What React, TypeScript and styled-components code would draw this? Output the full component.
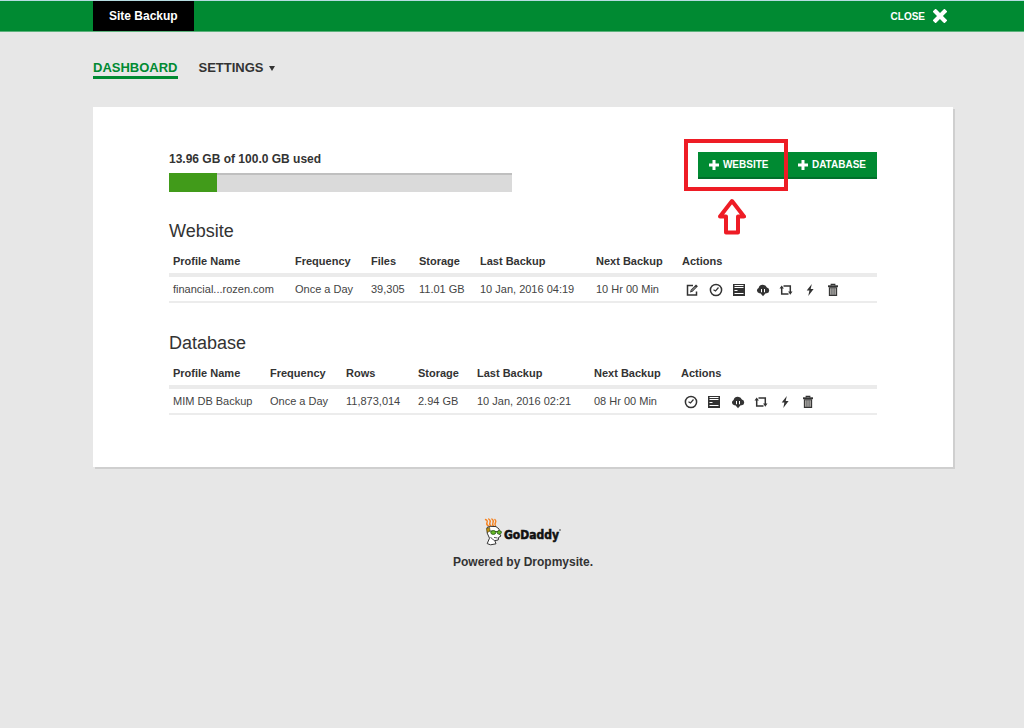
import React from "react";
import styled, { createGlobalStyle } from "styled-components";

const GlobalStyle = createGlobalStyle`
  * { box-sizing: border-box; }
  body {
    margin: 0;
    background: #e7e7e7;
    color: #333;
    font-family: "Liberation Sans", Arial, Helvetica, sans-serif;
    font-size: 12px;
    line-height: 16px;
  }
  button { font-family: inherit; cursor: pointer; }
`;

const TopBar = styled.header`
  display: flex;
  justify-content: space-between;
  height: 32px;
  padding: 0 77px 0 93px;
  background: #008a32;
  border-top: 1px solid #b5dce0;
  border-bottom: 1px solid #5bb27b;
`;

const Brand = styled.h1`
  display: flex;
  align-items: center;
  margin: 0;
  padding: 0 16px;
  background: #000;
  color: #fff;
  font-size: 12px;
`;

const CloseButton = styled.button`
  display: flex;
  align-items: center;
  gap: 8px;
  padding: 0;
  border: 0;
  background: none;
  color: #fff;
  font-size: 10px;
  font-weight: bold;
`;

const Page = styled.div`
  padding: 0 71px 0 93px;
`;

const Nav = styled.nav`
  display: flex;
  align-items: flex-start;
  gap: 21px;
  padding: 28px 0;
`;

const NavLink = styled.a<{ $active?: boolean }>`
  display: flex;
  align-items: center;
  gap: 5px;
  border-bottom: 3px solid ${(p) => (p.$active ? "#008a32" : "transparent")};
  color: ${(p) => (p.$active ? "#008a32" : "#333")};
  font-size: 13px;
  font-weight: bold;
  line-height: 16px;
  text-decoration: none;
`;

const Card = styled.main`
  padding: 44px 76px 52px;
  background: #fff;
  box-shadow: 2px 2px 0 #cfcfcf;
`;

const Summary = styled.div`
  display: flex;
  justify-content: space-between;
  align-items: flex-start;
`;

const Usage = styled.div`
  flex: 0 1 343px;
`;

const UsageLabel = styled.div`
  margin-bottom: 6px;
  font-weight: bold;
`;

const Meter = styled.div`
  height: 19px;
  background: #dadada;
  border-top: 2px solid #bfbfbf;
`;

const MeterFill = styled.div`
  height: 19px;
  margin-top: -2px;
  background: #419b1a;
`;

const ButtonRow = styled.div`
  display: flex;
  gap: 3px;
  padding-top: 1px;
`;

const AddButton = styled.button`
  display: flex;
  align-items: center;
  gap: 4px;
  min-width: 86px;
  height: 27px;
  padding: 0 11px;
  border: 0;
  border-bottom: 2px solid #00702a;
  background: #008a32;
  color: #fff;
  font-size: 10px;
  font-weight: bold;
`;

const Highlighted = styled.div`
  position: relative;
`;

const HighlightBox = styled.div`
  position: absolute;
  inset: -13px -4px -12px -14px;
  border: 4px solid #ee1c25;
  pointer-events: none;
`;

const HighlightArrow = styled.svg`
  position: absolute;
  top: 46px;
  left: 20px;
`;

const Section = styled.section`
  margin-top: 27px;
  & + & {
    margin-top: 28px;
  }
`;

const SectionTitle = styled.h2`
  margin: 0 0 7px;
  font-size: 18px;
  font-weight: normal;
  line-height: 24px;
`;

const Table = styled.table`
  width: 100%;
  table-layout: fixed;
  border-collapse: collapse;
  font-size: 11px;
  text-align: left;
  white-space: nowrap;
`;

const HeadCell = styled.th`
  height: 25px;
  padding: 0 4px 1px;
  border-bottom: 4px solid #ebebeb;
`;

const Cell = styled.td`
  height: 27px;
  padding: 0 4px;
  border-bottom: 2px solid #ececec;
  color: #444;
`;

const Actions = styled.div<{ $count: number }>`
  display: flex;
  justify-content: space-between;
  width: ${(p) => p.$count * 24 - 13}px;
  margin-left: 3px;
  padding-top: 2px;
`;

const IconButton = styled.button`
  display: flex;
  padding: 0;
  border: 0;
  background: none;
  color: #333;
`;

const Footer = styled.footer`
  display: flex;
  flex-direction: column;
  align-items: center;
  gap: 6px;
  padding: 51px 0;
  font-weight: bold;
`;

type IconName = "edit" | "schedule" | "snapshots" | "download" | "restore" | "run" | "delete";

const icons: Record<IconName, React.ReactNode> = {
  edit: (
    <>
      <path d="M8 2.5H2.5V12H11.5V8.5" fill="none" stroke="currentColor" strokeWidth="1.5" />
      <path d="M5 9.5L5.6 7L11 1.4L12.9 3.3L7.5 8.8Z" fill="currentColor" />
      <path d="M6.6 7.9L10.6 3.9" stroke="#fff" strokeWidth="0.6" />
    </>
  ),
  schedule: (
    <g fill="none" stroke="currentColor">
      <circle cx="7" cy="7" r="5.6" strokeWidth="1.5" />
      <path d="M4.5 6.8L6.5 8L9.5 4.5" strokeWidth="1.2" />
    </g>
  ),
  snapshots: (
    <>
      <path d="M1 1H13V13H1Z" fill="currentColor" />
      <path d="M2.5 2.5H11.5M2.5 4.5H11.5M2.5 10.5H11.5" stroke="#fff" strokeWidth="1" />
      <path d="M2.5 7.5H5.5" stroke="#fff" strokeWidth="1" />
    </>
  ),
  download: (
    <>
      <path
        d="M3.2 10.3A2.8 2.8 0 0 1 2.6 5A4.4 4.4 0 0 1 10.9 4.6A2.9 2.9 0 0 1 10.8 10.3Z"
        fill="currentColor"
      />
      <path d="M7 6V9.5" stroke="#fff" strokeWidth="4" />
      <path d="M7 6V11" stroke="currentColor" strokeWidth="2" />
      <path d="M3.8 9.6H10.2L7 13.2Z" fill="currentColor" />
    </>
  ),
  restore: (
    <>
      <path d="M4.5 3H11.3V9M9.5 11H2.7V5" fill="none" stroke="currentColor" strokeWidth="1.5" />
      <path d="M0.5 5.5L2.7 2.5L4.9 5.5ZM9.1 8.5H13.5L11.3 11.8Z" fill="currentColor" />
    </>
  ),
  run: <path d="M8.8 1L3.7 7.6H6.4L5.3 13L10.6 5.9H7.7Z" fill="currentColor" />,
  delete: (
    <>
      <path d="M5.2 2.5V1.3H8.8V2.5" fill="none" stroke="currentColor" strokeWidth="1.2" />
      <path d="M2 2.3H12V4.2H2Z" fill="currentColor" />
      <path d="M3.4 4.8H10.6V12.4H3.4Z" fill="#a3a09c" stroke="currentColor" strokeWidth="1.1" />
      <path d="M5.5 5V12M7 5V12M8.5 5V12" stroke="#66696d" strokeWidth="0.6" />
    </>
  ),
};

const labels: Record<IconName, string> = {
  edit: "Edit",
  schedule: "Schedule",
  snapshots: "Snapshots",
  download: "Download",
  restore: "Restore",
  run: "Run now",
  delete: "Delete",
};

const Plus = () => (
  <svg width="10" height="10" viewBox="0 0 10 10" aria-hidden="true">
    <path d="M5 0V10M0 5H10" stroke="currentColor" strokeWidth="3" />
  </svg>
);

const Logo = () => (
  <svg width="78" height="30" viewBox="0 0 78 30" role="img" aria-label="GoDaddy">
    <path
      d="M1.5 1.5Q4 2.5 3 4.5T4.5 8M4.7 1Q7 2.5 6 4.5T7 8M7.9 1Q10 2.5 9 4.5T9.5 8M10.9 1.5Q12.5 3 11.5 4.5T11.5 8"
      fill="none"
      stroke="#f58220"
      strokeWidth="1.4"
      strokeLinecap="round"
    />
    <path
      d="M3.3 9.2Q6 7.8 12 8.6L15.2 11.2L14.6 14.8L17 18L14.6 19.4L14.2 22L10.8 22.6L12 25.8L6.6 26.8L3.2 25.6L5.5 20.2Q2 15.5 3.3 9.2Z"
      fill="#fff"
      stroke="#333"
      strokeWidth="1"
    />
    <path d="M6.5 19Q8 21.5 10.8 22.6M10 19.4L13.5 20" fill="none" stroke="#333" strokeWidth="0.8" />
    <path d="M2.4 10.5L5.6 9.4L6 13L3.4 14.5Z" fill="#c4940c" stroke="#443a16" strokeWidth="0.6" />
    <path d="M5.5 13L17.5 14" stroke="#365c20" strokeWidth="1.2" />
    <ellipse cx="9.3" cy="14.5" rx="2.5" ry="1.9" fill="#69be28" stroke="#2d5a1c" strokeWidth="0.9" />
    <ellipse cx="15.2" cy="14.4" rx="2.1" ry="1.8" fill="#69be28" stroke="#2d5a1c" strokeWidth="0.9" />
    <text
      x="20"
      y="21"
      fill="#111"
      stroke="#111"
      strokeWidth="0.5"
      fontSize="12"
      fontWeight="bold"
      fontFamily="'DejaVu Sans Condensed', sans-serif"
    >
      GoDaddy
    </text>
    <circle cx="76" cy="12" r="0.8" fill="#333" />
  </svg>
);

interface Backup {
  title: string;
  widths: number[];
  heads: string[];
  cells: string[];
  actions: IconName[];
}

const backups: Backup[] = [
  {
    title: "Website",
    widths: [122, 76, 48, 61, 116, 86],
    heads: ["Profile Name", "Frequency", "Files", "Storage", "Last Backup", "Next Backup"],
    cells: ["financial...rozen.com", "Once a Day", "39,305", "11.01 GB", "10 Jan, 2016 04:19", "10 Hr 00 Min"],
    actions: ["edit", "schedule", "snapshots", "download", "restore", "run", "delete"],
  },
  {
    title: "Database",
    widths: [97, 76, 72, 59, 117, 87],
    heads: ["Profile Name", "Frequency", "Rows", "Storage", "Last Backup", "Next Backup"],
    cells: ["MIM DB Backup", "Once a Day", "11,873,014", "2.94 GB", "10 Jan, 2016 02:21", "08 Hr 00 Min"],
    actions: ["schedule", "snapshots", "download", "restore", "run", "delete"],
  },
];

const BackupSection = ({ title, widths, heads, cells, actions }: Backup) => (
  <Section>
    <SectionTitle>{title}</SectionTitle>
    <Table aria-label={title}>
      <colgroup>
        {widths.map((w, i) => (
          <col key={i} width={w} />
        ))}
        <col />
      </colgroup>
      <thead>
        <tr>
          {heads.map((h) => (
            <HeadCell key={h}>{h}</HeadCell>
          ))}
          <HeadCell>Actions</HeadCell>
        </tr>
      </thead>
      <tbody>
        <tr>
          {cells.map((c) => (
            <Cell key={c}>{c}</Cell>
          ))}
          <Cell>
            <Actions $count={actions.length}>
              {actions.map((a) => (
                <IconButton key={a} type="button" aria-label={labels[a]}>
                  <svg width="14" height="14" viewBox="0 0 14 14" aria-hidden="true">
                    {icons[a]}
                  </svg>
                </IconButton>
              ))}
            </Actions>
          </Cell>
        </tr>
      </tbody>
    </Table>
  </Section>
);

export default function App() {
  const used = 13.96;
  return (
    <>
      <GlobalStyle />
      <TopBar>
        <Brand>Site Backup</Brand>
        <CloseButton type="button">
          CLOSE
          <svg width="14" height="14" viewBox="0 0 14 14" aria-hidden="true">
            <path
              d="M2.6 2.6L11.4 11.4M11.4 2.6L2.6 11.4"
              stroke="currentColor"
              strokeWidth="4.2"
              strokeLinecap="square"
            />
          </svg>
        </CloseButton>
      </TopBar>
      <Page>
        <Nav>
          <NavLink href="#dashboard" $active>
            DASHBOARD
          </NavLink>
          <NavLink href="#settings">
            SETTINGS
            <svg width="6" height="5" viewBox="0 0 6 5" aria-hidden="true">
              <path d="M0 0H6L3 5Z" fill="currentColor" />
            </svg>
          </NavLink>
        </Nav>
        <Card>
          <Summary>
            <Usage>
              <UsageLabel>13.96 GB of 100.0 GB used</UsageLabel>
              <Meter role="meter" aria-label="Storage used" aria-valuenow={used} aria-valuemin={0} aria-valuemax={100}>
                <MeterFill style={{ width: `${used}%` }} />
              </Meter>
            </Usage>
            <ButtonRow>
              <Highlighted>
                <AddButton type="button">
                  <Plus />
                  WEBSITE
                </AddButton>
                <HighlightBox />
                <HighlightArrow width="28" height="38" viewBox="0 0 28 38" aria-hidden="true">
                  <path
                    d="M14 3L26 18.5H20V34.5H8V18.5H2Z"
                    fill="#fff"
                    stroke="#ee1c25"
                    strokeWidth="4"
                    strokeLinejoin="round"
                  />
                </HighlightArrow>
              </Highlighted>
              <AddButton type="button">
                <Plus />
                DATABASE
              </AddButton>
            </ButtonRow>
          </Summary>
          {backups.map((b) => (
            <BackupSection key={b.title} {...b} />
          ))}
        </Card>
        <Footer>
          <Logo />
          <div>Powered by Dropmysite.</div>
        </Footer>
      </Page>
    </>
  );
}
